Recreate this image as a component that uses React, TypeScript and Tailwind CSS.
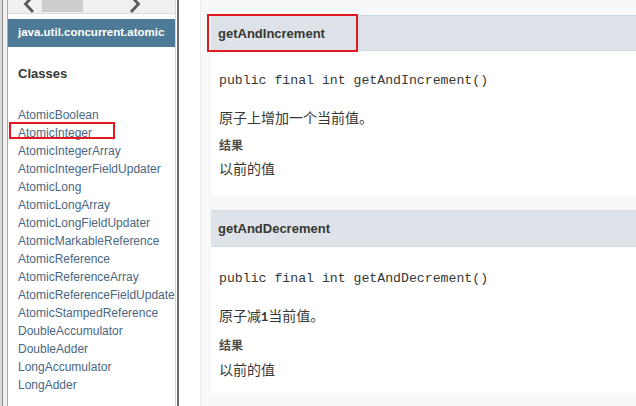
import React from "react";

const classes = [
  "AtomicBoolean",
  "AtomicInteger",
  "AtomicIntegerArray",
  "AtomicIntegerFieldUpdater",
  "AtomicLong",
  "AtomicLongArray",
  "AtomicLongFieldUpdater",
  "AtomicMarkableReference",
  "AtomicReference",
  "AtomicReferenceArray",
  "AtomicReferenceFieldUpdater",
  "AtomicStampedReference",
  "DoubleAccumulator",
  "DoubleAdder",
  "LongAccumulator",
  "LongAdder",
];

const sans = "font-['Liberation_Sans',Arial,sans-serif]";
const cjk = "font-['Liberation_Sans','Noto_Sans_CJK_SC',sans-serif]";

function MethodCard({
  name,
  sig,
  desc,
  boxed,
}: {
  name: string;
  sig: string;
  desc: React.ReactNode;
  boxed?: boolean;
}) {
  return (
    <div className="flex flex-col">
      <div
        className={`relative bg-[#dee3e9] border-y border-[#d0d9e0] flex items-center pl-[7px] ${
          boxed ? "h-[36px]" : "h-[37px]"
        }`}
      >
        <span className={`${sans} text-[13px] font-bold text-[#353833] leading-none`}>{name}</span>
        {boxed && (
          <span className="absolute left-[-4px] top-[-2px] w-[151px] h-[38px] border-2 border-[#e4161f]" />
        )}
      </div>
      <div
        className={`bg-white pl-[8px] flex flex-col ${boxed ? "pt-[22px] pb-[17px]" : "pt-[24px] pb-[13px]"}`}
      >
        <div className="font-['Liberation_Mono','Courier_New',monospace] text-[13.2px] leading-[16px] text-[#353833] whitespace-nowrap">
          {sig}
        </div>
        <div className={`${cjk} mt-[19px] text-[14px] leading-[20px] text-[#353833]`}>{desc}</div>
        <div className={`${cjk} mt-[10px] text-[12px] leading-[16px] font-bold text-[#4e4e4e]`}>结果</div>
        <div className={`${cjk} text-[14px] leading-[20px] text-[#353833] ${boxed ? "mt-[5px]" : "mt-[6px]"}`}>
          以前的值
        </div>
      </div>
    </div>
  );
}

export default function App() {
  return (
    <div className={`w-[636px] h-[406px] overflow-hidden flex bg-white ${sans}`}>
      {/* left frame borders */}
      <div className="w-[2px] shrink-0 bg-[#dadada]" />
      <div className="w-px shrink-0 bg-[#8c8c8c]" />
      <div className="w-[4px] shrink-0 bg-[#f0f0f0]" />
      <div className="w-px shrink-0 bg-[#a8a8a8]" />

      {/* left content */}
      <div className="w-[167px] shrink-0 overflow-hidden flex flex-col">
        <div className="relative h-[14px] shrink-0 bg-[#f0f0f0] border-b border-[#dcdcdc]">
          <svg className="absolute left-[13px] top-0" width="14" height="13" viewBox="0 0 14 13">
            <polyline points="12,-4 4.5,4 12,12" fill="none" stroke="#5a5a5a" strokeWidth="2.8" />
          </svg>
          <div className="absolute left-[34px] top-0 w-[41px] h-[12px] bg-[#cdcdcd]" />
          <svg className="absolute left-[121px] top-0" width="14" height="13" viewBox="0 0 14 13">
            <polyline points="2,-4 9.5,4 2,12" fill="none" stroke="#5a5a5a" strokeWidth="2.8" />
          </svg>
        </div>
        <div className="h-[5px] shrink-0" />
        <div className="h-[28px] shrink-0 bg-[#4d7a97] flex items-center pl-[10px]">
          <span className="text-white font-bold text-[11.5px] leading-none whitespace-nowrap">
            java.util.concurrent.atomic
          </span>
        </div>
        <div className="mt-[18px] pl-[10px] text-[13px] font-bold leading-[18px] text-[#353833]">Classes</div>
        <ul className="mt-[23px] flex flex-col">
          {classes.map((c) => (
            <li
              key={c}
              className="relative h-[18px] leading-[18px] pl-[10px] text-[12px] text-[#4a6782] whitespace-nowrap"
            >
              {c}
              {c === "AtomicInteger" && (
                <span className="absolute left-[1px] top-[-2px] w-[106px] h-[17px] border-2 border-[#e4161f]" />
              )}
            </li>
          ))}
        </ul>
      </div>

      {/* splitter */}
      <div className="w-px shrink-0 bg-[#d4d4d4]" />
      <div className="w-px shrink-0 bg-white" />
      <div className="w-[2px] shrink-0 bg-[#6b6b6b]" />
      <div className="w-[21px] shrink-0 bg-white" />
      <div className="w-px shrink-0 bg-[#ececec]" />

      {/* right content */}
      <div className="flex-1 bg-[#f8f8f8] pl-[10px] pt-[15px] flex flex-col gap-[14px] overflow-hidden">
        <MethodCard
          name="getAndIncrement"
          sig="public final int getAndIncrement()"
          desc="原子上增加一个当前值。"
          boxed
        />
        <MethodCard
          name="getAndDecrement"
          sig="public final int getAndDecrement()"
          desc={
            <>
              原子减<span className="font-['Liberation_Mono',monospace] text-[12px] font-bold">1</span>当前值。
            </>
          }
        />
      </div>
    </div>
  );
}
